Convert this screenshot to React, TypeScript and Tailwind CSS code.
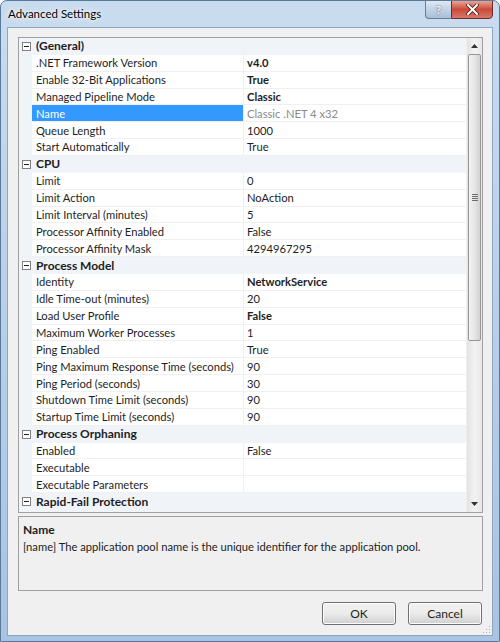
import React from 'react';

type Row =
  | { kind: 'cat'; label: string }
  | { kind: 'prop'; label: string; value: string; bold?: boolean; selected?: boolean };

const rows: Row[] = [
  { kind: 'cat', label: '(General)' },
  { kind: 'prop', label: '.NET Framework Version', value: 'v4.0', bold: true },
  { kind: 'prop', label: 'Enable 32-Bit Applications', value: 'True', bold: true },
  { kind: 'prop', label: 'Managed Pipeline Mode', value: 'Classic', bold: true },
  { kind: 'prop', label: 'Name', value: 'Classic .NET 4 x32', selected: true },
  { kind: 'prop', label: 'Queue Length', value: '1000' },
  { kind: 'prop', label: 'Start Automatically', value: 'True' },
  { kind: 'cat', label: 'CPU' },
  { kind: 'prop', label: 'Limit', value: '0' },
  { kind: 'prop', label: 'Limit Action', value: 'NoAction' },
  { kind: 'prop', label: 'Limit Interval (minutes)', value: '5' },
  { kind: 'prop', label: 'Processor Affinity Enabled', value: 'False' },
  { kind: 'prop', label: 'Processor Affinity Mask', value: '4294967295' },
  { kind: 'cat', label: 'Process Model' },
  { kind: 'prop', label: 'Identity', value: 'NetworkService', bold: true },
  { kind: 'prop', label: 'Idle Time-out (minutes)', value: '20' },
  { kind: 'prop', label: 'Load User Profile', value: 'False', bold: true },
  { kind: 'prop', label: 'Maximum Worker Processes', value: '1' },
  { kind: 'prop', label: 'Ping Enabled', value: 'True' },
  { kind: 'prop', label: 'Ping Maximum Response Time (seconds)', value: '90' },
  { kind: 'prop', label: 'Ping Period (seconds)', value: '30' },
  { kind: 'prop', label: 'Shutdown Time Limit (seconds)', value: '90' },
  { kind: 'prop', label: 'Startup Time Limit (seconds)', value: '90' },
  { kind: 'cat', label: 'Process Orphaning' },
  { kind: 'prop', label: 'Enabled', value: 'False' },
  { kind: 'prop', label: 'Executable', value: '' },
  { kind: 'prop', label: 'Executable Parameters', value: '' },
  { kind: 'cat', label: 'Rapid-Fail Protection' },
];

function Minus() {
  return (
    <span className="w-[9px] h-[9px] border border-[#808080] bg-white flex items-center justify-center">
      <span className="w-[5px] h-px bg-[#1e1e1e]" />
    </span>
  );
}

function GridRow({ row }: { row: Row }) {
  if (row.kind === 'cat') {
    return (
      <div className="h-[16.86px] flex items-center bg-[#f0f3f8]">
        <div className="w-[13px] flex justify-center pl-[1px]">
          <Minus />
        </div>
        <span className="pl-[4px] font-bold text-[12px] text-[#1e1e1e] whitespace-nowrap">{row.label}</span>
      </div>
    );
  }
  return (
    <div className="h-[16.86px] flex bg-[#f0f3f8]">
      <div className="w-[13px] shrink-0" />
      <div
        className={`w-[211px] shrink-0 flex items-center pl-[4px] whitespace-nowrap overflow-hidden border-b border-[#f0f0f0] ${
          row.selected ? 'bg-[#3399ff] text-white' : 'bg-white text-[#1e1e1e]'
        }`}
      >
        {row.label}
      </div>
      <div className="w-px shrink-0 bg-[#f0f0f0]" />
      <div
        className={`flex-1 flex items-center pl-[3px] whitespace-nowrap bg-white border-b border-[#f0f0f0] ${
          row.bold ? 'font-bold' : ''
        } ${row.selected ? 'text-[#8a8a8a]' : 'text-[#1e1e1e]'}`}
      >
        {row.value}
      </div>
    </div>
  );
}

function ScrollBar() {
  return (
    <div className="w-[16px] shrink-0 flex flex-col bg-gradient-to-r from-[#e3e3e3] via-[#f2f2f2] to-[#e8e8e8] border-l border-[#f0f0f0]">
      <div className="h-[16px] flex items-center justify-center">
        <svg width="7" height="4" viewBox="0 0 7 4">
          <path d="M3.5 0 L7 4 L0 4 Z" fill="#333" />
        </svg>
      </div>
      <div className="mx-[1px] h-[287px] rounded-[2px] border border-[#979797] bg-gradient-to-r from-[#f3f3f3] via-[#e6e6e6] to-[#d2d2d2] flex items-center justify-center">
        <div className="flex flex-col gap-[1px]">
          <span className="w-[6px] h-px bg-[#6e6e6e]" />
          <span className="w-[6px] h-px bg-[#6e6e6e]" />
          <span className="w-[6px] h-px bg-[#6e6e6e]" />
          <span className="w-[6px] h-px bg-[#6e6e6e]" />
        </div>
      </div>
      <div className="flex-1" />
      <div className="h-[16px] flex items-center justify-center">
        <svg width="7" height="4" viewBox="0 0 7 4">
          <path d="M0 0 L7 0 L3.5 4 Z" fill="#333" />
        </svg>
      </div>
    </div>
  );
}

function WinButton({ label }: { label: string }) {
  return (
    <button className="w-[74px] h-[23px] rounded-[3px] border border-[#707070] bg-gradient-to-b from-[#f2f2f2] via-[#ebebeb] to-[#cfcfcf] text-[#1e1e1e] text-[12px] shadow-[inset_0_0_0_1px_#fcfcfc]">
      {label}
    </button>
  );
}

export default function App() {
  return (
    <div
      className="w-[500px] h-[642px] flex flex-col bg-gradient-to-b from-[#c9dcef] via-[#b8cfe8] to-[#a8c4e2] border border-[#5a7899] rounded-t-[7px] text-[11.2px] leading-none overflow-hidden"
      style={{ fontFamily: '"Segoe UI", Lato, "Open Sans", sans-serif' }}
    >
      {/* title bar */}
      <div className="h-[26px] shrink-0 flex items-start">
        <span className="pl-[7px] pt-[7px] text-[11.5px] text-black [text-shadow:0_0_6px_#ffffff,0_0_3px_#ffffff]">
          Advanced Settings
        </span>
        <div className="flex-1" />
        <div className="flex mr-[6px] -mt-px">
          <div className="w-[26px] h-[19px] rounded-bl-[4px] border border-[#6a7f98] border-r-0 bg-gradient-to-b from-[#dfe8f2] via-[#c2d3e6] to-[#a9bfd8] flex items-center justify-center text-[#f8f8f8] font-bold text-[12px] [text-shadow:0_0_2px_#334455]">
            ?
          </div>
          <div className="w-[42px] h-[19px] rounded-br-[4px] border border-[#6e2a25] bg-gradient-to-b from-[#e8a394] via-[#c9493a] to-[#d7786a] flex items-center justify-center">
            <svg width="13" height="11" viewBox="0 0 13 11">
              <path d="M2 1 L11 10 M11 1 L2 10" stroke="#4a1a14" strokeWidth="3.6" strokeLinecap="square" />
              <path d="M2 1 L11 10 M11 1 L2 10" stroke="#ffffff" strokeWidth="2" strokeLinecap="square" />
            </svg>
          </div>
        </div>
      </div>

      {/* client area */}
      <div className="mx-[6px] h-[609px] shrink-0 bg-[#f0f0f0] border border-[#8da6c1] flex flex-col">
        <div className="mt-[9px] ml-[10px] mr-[9px] h-[476px] shrink-0 border border-[#a0a0a0] bg-white flex">
          <div className="flex-1 flex flex-col overflow-hidden bg-[#f0f3f8]">
            {rows.map((r, i) => (
              <GridRow key={i} row={r} />
            ))}
          </div>
          <ScrollBar />
        </div>

        <div className="mt-[3px] ml-[10px] mr-[9px] h-[75px] shrink-0 border border-[#a0a0a0] px-[4px] pt-[4px] text-[#1e1e1e]">
          <div className="font-bold text-[12px] h-[17px] flex items-center">Name</div>
          <div className="h-[17px] flex items-center whitespace-nowrap">
            [name] The application pool name is the unique identifier for the application pool.
          </div>
        </div>

        <div className="mt-[11px] mr-[10px] flex justify-end gap-[12px]">
          <WinButton label="OK" />
          <WinButton label="Cancel" />
        </div>
        <div className="flex-1" />
        <div className="flex justify-end pr-[1px] pb-[1px]">
          <svg width="8" height="8" viewBox="0 0 8 8">
            <rect x="6" y="0" width="1" height="1" fill="#b0b0b0" />
            <rect x="3" y="3" width="1" height="1" fill="#b0b0b0" />
            <rect x="6" y="3" width="1" height="1" fill="#b0b0b0" />
            <rect x="0" y="6" width="1" height="1" fill="#b0b0b0" />
            <rect x="3" y="6" width="1" height="1" fill="#b0b0b0" />
            <rect x="6" y="6" width="1" height="1" fill="#b0b0b0" />
          </svg>
        </div>
      </div>
    </div>
  );
}
